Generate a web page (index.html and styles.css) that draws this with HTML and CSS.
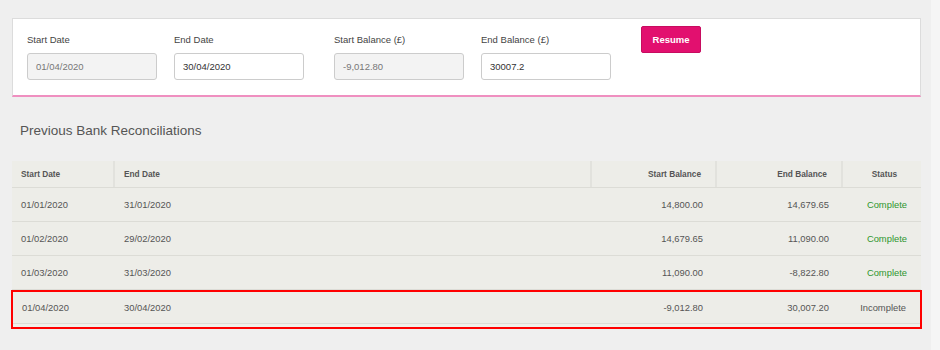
FILE: index.html
```html
<!DOCTYPE html>
<html>
<head>
    <meta charset="UTF-8">
    <title>Bank Reconciliation</title>
    <link rel="stylesheet" href="styles.css">
</head>
<body>
<div class="page">
    <div class="recon-form">
        <div class="field-pair">
            <div class="field">
                <label>Start Date</label>
                <input class="input" type="text" value="01/04/2020" disabled>
            </div>
            <div class="field">
                <label>End Date</label>
                <input class="input" type="text" value="30/04/2020">
            </div>
        </div>
        <div class="field-pair">
            <div class="field">
                <label>Start Balance (£)</label>
                <input class="input" type="text" value="-9,012.80" disabled>
            </div>
            <div class="field">
                <label>End Balance (£)</label>
                <input class="input" type="text" value="30007.2">
            </div>
        </div>
        <button class="btn-resume">Resume</button>
    </div>

    <h2 class="section-title">Previous Bank Reconciliations</h2>

    <div class="recon-table">
        <div class="tr head">
            <div class="th">Start Date</div>
            <div class="th">End Date</div>
            <div class="th num">Start Balance</div>
            <div class="th num">End Balance</div>
            <div class="th center">Status</div>
        </div>
        <div class="tr">
            <div class="td">01/01/2020</div>
            <div class="td">31/01/2020</div>
            <div class="td num">14,800.00</div>
            <div class="td num">14,679.65</div>
            <div class="td num complete">Complete</div>
        </div>
        <div class="tr">
            <div class="td">01/02/2020</div>
            <div class="td">29/02/2020</div>
            <div class="td num">14,679.65</div>
            <div class="td num">11,090.00</div>
            <div class="td num complete">Complete</div>
        </div>
        <div class="tr">
            <div class="td">01/03/2020</div>
            <div class="td">31/03/2020</div>
            <div class="td num">11,090.00</div>
            <div class="td num">-8,822.80</div>
            <div class="td num complete">Complete</div>
        </div>
        <div class="current">
            <div class="tr">
                <div class="td">01/04/2020</div>
                <div class="td">30/04/2020</div>
                <div class="td num">-9,012.80</div>
                <div class="td num">30,007.20</div>
                <div class="td num">Incomplete</div>
            </div>
        </div>
    </div>
</div>
</body>
</html>
```

FILE: styles.css
```css
html {
    background-color: #f5f5f5;
}
body {
    margin: 0;
    font-family: "Liberation Sans", Arial, sans-serif;
    color: #555;
}
.page {
    width: 931px;
    height: 350px;
    background-color: #efefef;
    padding-top: 18px;
    box-sizing: border-box;
    overflow: hidden;
}
.recon-form {
    display: flex;
    gap: 30px;
    margin: 0 10px 0 12px;
    padding: 7px 14px 15px 14px;
    background-color: #fff;
    border: 1px solid #dcdcdc;
    border-bottom: 2px solid #ef8fc0;
}
.field-pair {
    display: flex;
    gap: 17px;
}
.field {
    display: flex;
    flex-direction: column;
    margin-top: 7px;
}
.field label {
    font-size: 9.5px;
    line-height: 14px;
    color: #444;
    margin-bottom: 6px;
}
.input {
    width: 130px;
    height: 27px;
    box-sizing: border-box;
    padding: 0 8px;
    border: 1px solid #ccc;
    border-radius: 3px;
    font-family: "Liberation Sans", Arial, sans-serif;
    font-size: 9.5px;
    color: #333;
    background-color: #fff;
}
.input:disabled {
    background-color: #f3f3f3;
    color: #777;
}
.btn-resume {
    align-self: flex-start;
    width: 60px;
    height: 27px;
    background-color: #e2106f;
    border: 1px solid #c70c60;
    border-radius: 2px;
    color: #fff;
    font-family: "Liberation Sans", Arial, sans-serif;
    font-weight: bold;
    font-size: 9.5px;
    padding: 0;
    cursor: pointer;
}
.section-title {
    margin: 26px 0 22px 20px;
    font-size: 13.5px;
    line-height: 16px;
    font-weight: normal;
    color: #555;
}
.recon-table {
    margin: 0 10px 0 12px;
}
.tr {
    display: grid;
    grid-template-columns: 103px 477px 125px 126px 78px;
    background-color: #ededE8;
    border-bottom: 1px solid #dcdcd6;
}
.th, .td {
    padding: 0 9px;
    display: flex;
    align-items: center;
}
.th {
    height: 26px;
    font-size: 8.3px;
    font-weight: bold;
    color: #555;
    border-right: 2px solid #e2e2dd;
}
.th:last-child {
    border-right: none;
}
.td {
    height: 33px;
    font-size: 9.4px;
    color: #555;
}
.num {
    justify-content: flex-end;
    padding-right: 14px;
}
.th.num {
    padding-right: 14px;
}
.center {
    justify-content: center;
    padding-left: 14px;
}
.complete {
    color: #2e962e;
}
.current {
    margin: 0 -1px;
    border: 2px solid #f00;
    padding-bottom: 3px;
    background-color: #efefea;
}
.current .tr {
    grid-template-columns: 102px 477px 125px 126px 77px;
}
.current .td {
    height: 31px;
}
```
